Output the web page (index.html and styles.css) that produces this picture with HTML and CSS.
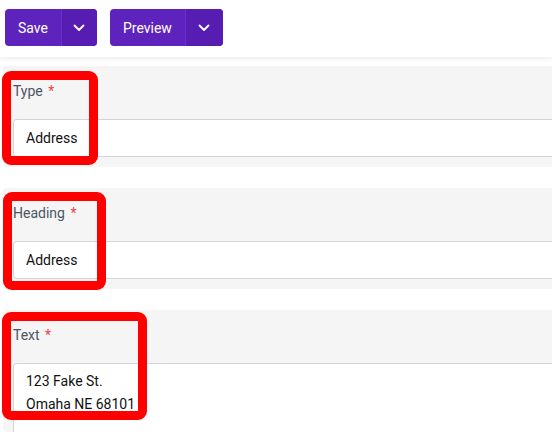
FILE: index.html
```html
<!DOCTYPE html>
<html>
<head>
<meta charset="utf-8">
<link rel="stylesheet" href="styles.css">
</head>
<body>
<header class="toolbar">
  <div class="btn-group">
    <button class="btn-main">Save</button>
    <button class="btn-caret"><svg width="12" height="8" viewBox="0 0 12 8"><path d="M1.5 1.5 L6 6 L10.5 1.5" fill="none" stroke="#fff" stroke-width="1.8" stroke-linecap="round" stroke-linejoin="round"/></svg></button>
  </div>
  <div class="btn-group">
    <button class="btn-main">Preview</button>
    <button class="btn-caret wide"><svg width="12" height="8" viewBox="0 0 12 8"><path d="M1.5 1.5 L6 6 L10.5 1.5" fill="none" stroke="#fff" stroke-width="1.8" stroke-linecap="round" stroke-linejoin="round"/></svg></button>
  </div>
</header>
<main class="fields">
  <section class="field">
    <div class="label">Type <span class="req">*</span></div>
    <div class="input">Address</div>
    <div class="mark mark-1"></div>
  </section>
  <section class="field">
    <div class="label">Heading <span class="req">*</span></div>
    <div class="input">Address</div>
    <div class="mark mark-2"></div>
  </section>
  <section class="field last">
    <div class="label">Text <span class="req">*</span></div>
    <div class="textarea">123 Fake St.<br>Omaha NE 68101</div>
    <div class="mark mark-3"></div>
  </section>
</main>
</body>
</html>
```
FILE: styles.css
```css
html, body {
  margin: 0;
  padding: 0;
  background: #ffffff;
  overflow: hidden;
  font-family: "Roboto", "Noto Sans", sans-serif;
  font-size: 14px;
}
.toolbar {
  display: flex;
  gap: 13px;
  padding: 9px 0 0 5px;
  height: 58px;
  box-sizing: border-box;
  box-shadow: 0 2px 3px rgba(0, 0, 0, 0.05);
  border-bottom: 1px solid #f3f3f3;
}
.btn-group {
  display: flex;
  height: 37px;
  border-radius: 4px;
  overflow: hidden;
  background: #5e22bd;
}
.btn-group button {
  border: none;
  background: transparent;
  color: #ffffff;
  font-family: inherit;
  font-size: 14px;
  font-weight: 400;
  cursor: pointer;
  padding: 0;
  display: flex;
  align-items: center;
  justify-content: center;
}
.btn-main {
  padding: 0 13px !important;
}
.btn-caret {
  width: 36px;
  background: #571db2 !important;
  border-left: 1px solid #6a2fd0 !important;
}
.btn-caret.wide {
  width: 38px;
}
.fields {
  padding: 8px 0 0 3px;
}
.field {
  position: relative;
  background: #f5f5f5;
  border-radius: 4px 0 0 4px;
  padding: 15px 0 10px 10px;
  margin-bottom: 21px;
}
.field.last {
  padding-bottom: 0;
  margin-bottom: 0;
}
.label {
  color: #4b5563;
  line-height: 20px;
  margin-bottom: 18px;
}
.req {
  color: #ef4444;
  margin-left: 2px;
}
.input {
  height: 36px;
  line-height: 36px;
  background: #ffffff;
  border: 1px solid #d4d4dc;
  border-right: none;
  border-radius: 4px 0 0 4px;
  padding-left: 12px;
  color: #111111;
}
.textarea {
  height: 62px;
  background: #ffffff;
  border: 1px solid #d4d4dc;
  border-right: none;
  border-bottom: none;
  border-radius: 4px 0 0 0;
  padding: 6px 0 0 12px;
  line-height: 23px;
  color: #111111;
}
.mark {
  position: absolute;
  box-sizing: border-box;
  border: 9px solid #ff0000;
  border-radius: 9px;
}
.mark-1 {
  left: -1px;
  top: 5px;
  width: 96px;
  height: 94px;
}
.mark-2 {
  left: 0;
  top: 4px;
  width: 103px;
  height: 98px;
}
.mark-3 {
  left: -1px;
  top: 2px;
  width: 145px;
  height: 108px;
}
```
